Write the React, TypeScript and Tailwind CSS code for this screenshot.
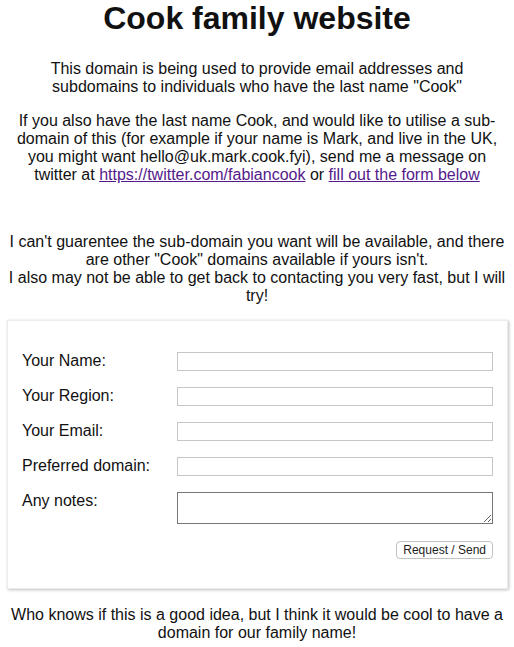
import React from 'react';

const fields = ['Your Name:', 'Your Region:', 'Your Email:', 'Preferred domain:'];

export default function App() {
  return (
    <div className="min-h-screen bg-white px-2 text-center text-[16px] leading-[18px] text-[#111] font-['Liberation_Sans',Arial,sans-serif]">
      <h1 className="text-[32px] leading-[37px] font-bold">Cook family website</h1>

      <p className="mt-[23px]">
        This domain is being used to provide email addresses and
        <br />
        subdomains to individuals who have the last name "Cook"
      </p>

      <p className="mt-4">
        If you also have the last name Cook, and would like to utilise a sub-domain of this (for example if your name is
        Mark, and live in the UK, you might want hello@uk.mark.cook.fyi), send me a message on twitter at{' '}
        <a href="#" className="text-[#551a8b] underline">
          https://twitter.com/fabiancook
        </a>{' '}
        or{' '}
        <a href="#" className="text-[#551a8b] underline">
          fill out the form below
        </a>
      </p>

      <p className="mt-[49px]">
        I can't guarentee the sub-domain you want will be available, and there are other "Cook" domains available if
        yours isn't.
        <br />
        I also may not be able to get back to contacting you very fast, but I will try!
      </p>

      {/* request form */}
      <form className="mt-[15px] ml-[-1px] mr-[-2px] border border-[#ececec] bg-white px-[14px] pt-[31px] pb-[29px] text-left shadow-[1px_1px_3px_rgba(0,0,0,0.25)]">
        <div className="flex flex-col gap-4">
          {fields.map((f) => (
            <div key={f} className="flex items-start">
              <label className="w-[155px] shrink-0">{f}</label>
              <input type="text" className="h-[19px] flex-1 border border-[#c6c6c6] bg-white outline-none" />
            </div>
          ))}
          <div className="flex items-start">
            <label className="w-[155px] shrink-0">Any notes:</label>
            <textarea className="h-[32px] flex-1 border border-[#767676] bg-white outline-none" />
          </div>
        </div>
        <div className="mt-[17px] flex justify-end">
          <button
            type="button"
            className="h-[18px] rounded-[4px] border border-[#c2c2c2] bg-white px-[6px] text-[12px] leading-[16px] text-[#222] font-['Liberation_Sans',Arial,sans-serif]"
          >
            Request / Send
          </button>
        </div>
      </form>

      <p className="mt-[17px] pb-4">
        Who knows if this is a good idea, but I think it would be cool to have a domain for our family name!
      </p>
    </div>
  );
}
